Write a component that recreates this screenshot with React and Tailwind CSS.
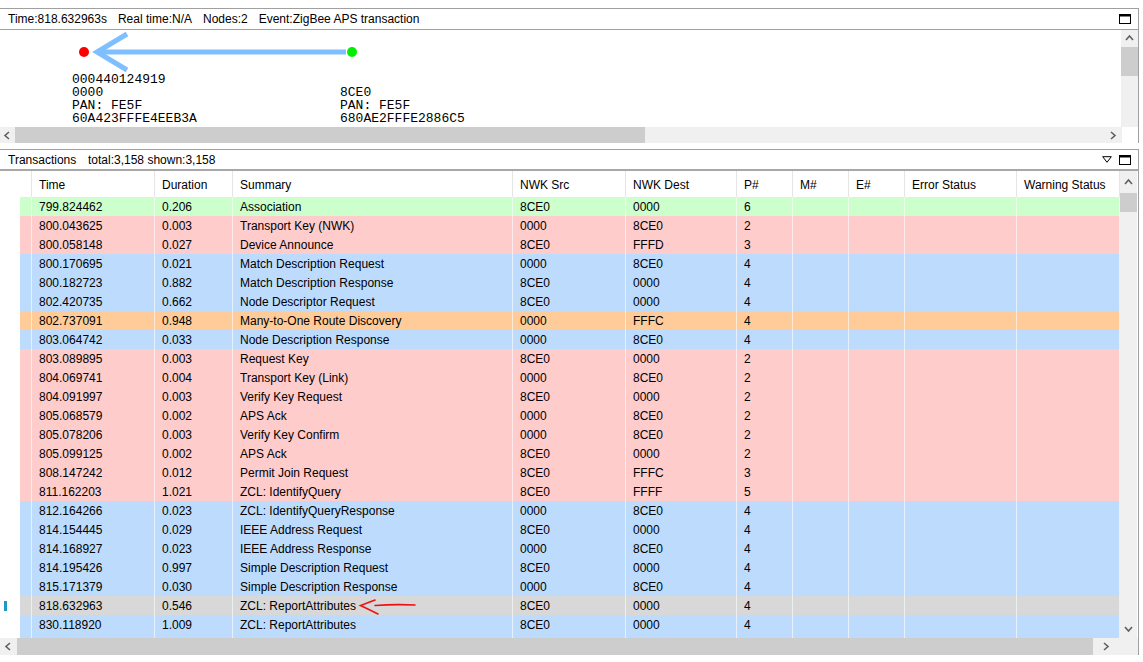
import React from 'react';

const COLS = [
  { key: 'time', label: 'Time', w: 'w-[123px]' },
  { key: 'dur', label: 'Duration', w: 'w-[78px]' },
  { key: 'sum', label: 'Summary', w: 'w-[280px]' },
  { key: 'src', label: 'NWK Src', w: 'w-[113px]' },
  { key: 'dst', label: 'NWK Dest', w: 'w-[111px]' },
  { key: 'p', label: 'P#', w: 'w-[56px]' },
  { key: 'm', label: 'M#', w: 'w-[56px]' },
  { key: 'e', label: 'E#', w: 'w-[56px]' },
  { key: 'err', label: 'Error Status', w: 'w-[112px]' },
  { key: 'warn', label: 'Warning Status', w: 'w-[103px]' },
];

const ROW_BG = {
  g: 'bg-[#ccffcc]',
  r: 'bg-[#ffcccc]',
  b: 'bg-[#bddcfd]',
  o: 'bg-[#ffcc99]',
  s: 'bg-[#d8d8d8]',
};

const ROWS = [
  ['799.824462', '0.206', 'Association', '8CE0', '0000', '6', 'g'],
  ['800.043625', '0.003', 'Transport Key (NWK)', '0000', '8CE0', '2', 'r'],
  ['800.058148', '0.027', 'Device Announce', '8CE0', 'FFFD', '3', 'r'],
  ['800.170695', '0.021', 'Match Description Request', '0000', '8CE0', '4', 'b'],
  ['800.182723', '0.882', 'Match Description Response', '8CE0', '0000', '4', 'b'],
  ['802.420735', '0.662', 'Node Descriptor Request', '8CE0', '0000', '4', 'b'],
  ['802.737091', '0.948', 'Many-to-One Route Discovery', '0000', 'FFFC', '4', 'o'],
  ['803.064742', '0.033', 'Node Description Response', '0000', '8CE0', '4', 'b'],
  ['803.089895', '0.003', 'Request Key', '8CE0', '0000', '2', 'r'],
  ['804.069741', '0.004', 'Transport Key (Link)', '0000', '8CE0', '2', 'r'],
  ['804.091997', '0.003', 'Verify Key Request', '8CE0', '0000', '2', 'r'],
  ['805.068579', '0.002', 'APS Ack', '0000', '8CE0', '2', 'r'],
  ['805.078206', '0.003', 'Verify Key Confirm', '0000', '8CE0', '2', 'r'],
  ['805.099125', '0.002', 'APS Ack', '8CE0', '0000', '2', 'r'],
  ['808.147242', '0.012', 'Permit Join Request', '8CE0', 'FFFC', '3', 'r'],
  ['811.162203', '1.021', 'ZCL: IdentifyQuery', '8CE0', 'FFFF', '5', 'r'],
  ['812.164266', '0.023', 'ZCL: IdentifyQueryResponse', '0000', '8CE0', '4', 'b'],
  ['814.154445', '0.029', 'IEEE Address Request', '8CE0', '0000', '4', 'b'],
  ['814.168927', '0.023', 'IEEE Address Response', '0000', '8CE0', '4', 'b'],
  ['814.195426', '0.997', 'Simple Description Request', '8CE0', '0000', '4', 'b'],
  ['815.171379', '0.030', 'Simple Description Response', '0000', '8CE0', '4', 'b'],
  ['818.632963', '0.546', 'ZCL: ReportAttributes', '8CE0', '0000', '4', 's'],
  ['830.118920', '1.009', 'ZCL: ReportAttributes', '8CE0', '0000', '4', 'b'],
  // next row only peeks in under the last one
  ['', '', '', '', '', '', 'b'],
];

// small scroll arrow, dir = up | down | left | right
function Chevron({ dir }) {
  const pts = {
    up: '1,6 4.5,2 8,6',
    down: '1,2 4.5,6 8,2',
    left: '6,1 2,4.5 6,8',
    right: '2,1 6,4.5 2,8',
  }[dir];
  return (
    <svg width="9" height="9" viewBox="0 0 9 9">
      <polyline points={pts} fill="none" stroke="#606060" strokeWidth="1.6" />
    </svg>
  );
}

function MaxIcon() {
  return (
    <svg width="12" height="10" viewBox="0 0 12 10">
      <rect x="0.5" y="0.5" width="11" height="9" fill="none" stroke="#000" strokeWidth="1" />
      <line x1="0" y1="1.5" x2="12" y2="1.5" stroke="#000" strokeWidth="2" />
    </svg>
  );
}

function TriDown() {
  return (
    <svg width="10" height="7" viewBox="0 0 10 7">
      <polygon points="0.7,0.7 9.3,0.7 5,6.3" fill="none" stroke="#000" strokeWidth="1" />
    </svg>
  );
}

function NodeDiagram() {
  return (
    <div className="relative flex-1 h-[97px] overflow-hidden">
      <svg className="absolute left-0 top-0" width="400" height="50">
        <line x1="99" y1="22" x2="346" y2="22" stroke="#80bfff" strokeWidth="5" />
        <polyline points="127,4 97,22 127,40" fill="none" stroke="#80bfff" strokeWidth="5" />
        <circle cx="84" cy="22" r="5" fill="#ff0000" />
        <circle cx="352" cy="22" r="5" fill="#00ee00" />
      </svg>
      <div className="absolute left-[72px] top-[43px] font-['Liberation_Mono',monospace] text-[13px] leading-[13px] text-black">
        <div>000440124919</div>
        <div>0000</div>
        <div>PAN:&nbsp;FE5F</div>
        <div>60A423FFFE4EEB3A</div>
      </div>
      <div className="absolute left-[340px] top-[56px] font-['Liberation_Mono',monospace] text-[13px] leading-[13px] text-black">
        <div>8CE0</div>
        <div>PAN:&nbsp;FE5F</div>
        <div>680AE2FFFE2886C5</div>
      </div>
    </div>
  );
}

export default function App() {
  return (
    <div className="w-[1143px] h-[662px] bg-white relative overflow-hidden font-['Liberation_Sans',sans-serif] text-[12px] text-black">
      <div className="h-[8px]" />

      {/* node view */}
      <div className="w-[1139px] border-r border-[#a0a0a0]">
        <div className="h-[22px] border-y border-[#a0a0a0] flex items-center pl-[8px] pr-[7px]">
          <div className="flex items-center gap-[11px] flex-1 whitespace-nowrap">
            <span>Time:818.632963s</span>
            <span>Real time:N/A</span>
            <span>Nodes:2</span>
            <span>Event:ZigBee APS transaction</span>
          </div>
          <MaxIcon />
        </div>
        <div className="flex">
          <NodeDiagram />
          <div className="w-[17px] h-[97px] bg-[#f0f0f0] flex flex-col items-center">
            <div className="h-[17px] flex items-center justify-center">
              <Chevron dir="up" />
            </div>
            <div className="w-[17px] h-[29px] bg-[#cdcdcd]" />
          </div>
        </div>
        <div className="flex h-[16px]">
          <div className="w-[1122px] bg-[#f0f0f0] flex items-center">
            <div className="w-[15px] flex justify-center">
              <Chevron dir="left" />
            </div>
            <div className="w-[630px] h-full bg-[#cdcdcd]" />
            <div className="flex-1" />
            <div className="w-[17px] flex justify-center">
              <Chevron dir="right" />
            </div>
          </div>
          <div className="flex-1 bg-white" />
        </div>
      </div>

      <div className="h-[6px]" />

      {/* transactions */}
      <div className="w-[1139px] border-r border-[#a0a0a0] relative">
        <div className="h-[22px] border-t border-[#a0a0a0] border-b-2 border-b-[#a8a8a8] flex items-center pl-[8px] pr-[7px]">
          <span className="w-[80px]">Transactions</span>
          <span className="flex-1">total:3,158 shown:3,158</span>
          <div className="flex items-center gap-[7px]">
            <TriDown />
            <MaxIcon />
          </div>
        </div>

        <div className="flex">
          <div className="w-[1120px] h-[467px] overflow-hidden">
            <div className="flex h-[26px] bg-white">
              <div className="w-[32px] h-full border-r border-[#e5e5e5]" />
              {COLS.map((c) => (
                <div key={c.key} className={`${c.w} h-full flex items-center pt-[2px] pl-[7px] border-r border-[#e5e5e5]`}>
                  {c.label}
                </div>
              ))}
            </div>
            {ROWS.map((r, i) => (
              <div key={i} className="flex h-[19px]">
                <div className="w-[20px] h-full flex items-center pl-[4px]">
                  {r[6] === 's' && <div className="w-[3px] h-[10px] bg-[#1b9bc3]" />}
                </div>
                <div className={`w-[12px] h-full border-r border-white/60 ${ROW_BG[r[6]]}`} />
                {COLS.map((c, j) => (
                  <div
                    key={c.key}
                    className={`${c.w} h-full flex items-center pl-[7px] border-r border-white/60 whitespace-nowrap ${ROW_BG[r[6]]}`}
                  >
                    {j < 6 ? r[j] : ''}
                  </div>
                ))}
              </div>
            ))}
          </div>
          <div className="w-[17px] h-[467px] bg-[#f0f0f0] flex flex-col items-center">
            <div className="h-[22px] flex items-center justify-center">
              <Chevron dir="up" />
            </div>
            <div className="w-[17px] h-[19px] bg-[#cdcdcd]" />
            <div className="flex-1" />
            <div className="h-[17px] flex items-center justify-center">
              <Chevron dir="down" />
            </div>
          </div>
        </div>

        <div className="flex h-[17px]">
          <div className="w-[1120px] bg-[#f0f0f0] flex items-center">
            <div className="w-[17px] flex justify-center">
              <Chevron dir="left" />
            </div>
            <div className="w-[1076px] h-full bg-[#cdcdcd]" />
            <div className="flex-1 flex justify-center">
              <Chevron dir="right" />
            </div>
          </div>
          <div className="flex-1 bg-[#f0f0f0]" />
        </div>

        {/* hand-drawn pointer at selected row */}
        <svg className="absolute left-[355px] top-[446px]" width="70" height="22" viewBox="0 0 70 22">
          <path d="M20 5 Q12 8 5.5 10.5 Q13 14 23 19" fill="none" stroke="#ee1111" strokeWidth="1.6" strokeLinecap="round" />
          <path d="M20 10.5 Q40 9 60 10" fill="none" stroke="#ee1111" strokeWidth="1.6" strokeLinecap="round" />
        </svg>
      </div>
    </div>
  );
}
